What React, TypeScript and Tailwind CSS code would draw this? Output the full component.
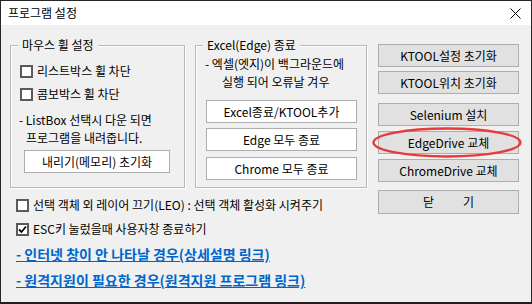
import type { ReactNode } from "react";

const FONT = "font-['Noto_Sans_CJK_KR','Noto_Sans',sans-serif]";

function CheckBox({ checked = false }: { checked?: boolean }) {
  return (
    <span className="flex h-[13px] w-[13px] shrink-0 items-center justify-center border-2 border-[#5a5a5a] bg-white">
      {checked && (
        <svg width="9" height="9" viewBox="0 0 9 9">
          <path d="M1 4.5 L3.5 7 L8 1.5" fill="none" stroke="#000" strokeWidth="1.8" />
        </svg>
      )}
    </span>
  );
}

function CheckRow({ label, checked }: { label: string; checked?: boolean }) {
  return (
    <div className="flex h-[16px] items-center gap-[4px] text-[12px] leading-[16px] text-black">
      <CheckBox checked={checked} />
      <span className="whitespace-nowrap">{label}</span>
    </div>
  );
}

function WinButton({ children, white = false, className = "" }: { children: ReactNode; white?: boolean; className?: string }) {
  return (
    <div
      className={`flex h-[23px] items-center justify-center border border-[#adadad] text-[12px] leading-[16px] text-black whitespace-nowrap ${
        white ? "bg-white" : "bg-[#e1e1e1]"
      } ${className}`}
    >
      {children}
    </div>
  );
}

function GroupBox({ title, className = "", children }: { title: string; className?: string; children: ReactNode }) {
  return (
    <div className={`relative h-[143px] border border-[#b9b9b9] shadow-[inset_1px_1px_0_#fff,1px_1px_0_#fff] ${className}`}>
      <span className="absolute -top-[9px] left-[7px] bg-[#f0f0f0] px-[4px] text-[12px] leading-[16px] whitespace-nowrap">
        {title}
      </span>
      {children}
    </div>
  );
}

export default function App() {
  return (
    <div className={`h-[304px] w-[532px] bg-[#1f1f1f] ${FONT}`}>
      <div className="flex h-[302px] flex-col border-x border-t border-[#262626]">
        {/* title bar */}
        <div className="flex h-[24px] items-center justify-between bg-white pl-[7px] pr-[10px]">
          <span className="text-[12px] leading-[16px] text-black">프로그램 설정</span>
          <svg width="11" height="11" viewBox="0 0 11 11">
            <path d="M0.5 0.5 L10.5 10.5 M10.5 0.5 L0.5 10.5" stroke="#000" strokeWidth="1" />
          </svg>
        </div>

        {/* body */}
        <div className="flex flex-1 bg-[#f0f0f0] text-black">
          <div className="flex flex-col pl-[9px] pt-[20px]">
            <div className="flex">
              <GroupBox title="마우스 휠 설정" className="w-[175px]">
                <div className="flex flex-col pl-[9px] pt-[17px]">
                  <CheckRow label="리스트박스 휠 차단" />
                  <div className="mt-[7px]">
                    <CheckRow label="콤보박스 휠 차단" />
                  </div>
                  <div className="mt-[9px] text-[12px] leading-[18px] whitespace-nowrap">
                    <div className="-ml-px">- ListBox 선택시 다운 되면</div>
                    <div className="pl-[6px]">프로그램을 내려줍니다.</div>
                  </div>
                  <WinButton white className="mt-[3px] ml-[4px] w-[146px]">
                    내리기(메모리) 초기화
                  </WinButton>
                </div>
              </GroupBox>

              <GroupBox title="Excel(Edge) 종료" className="ml-[10px] w-[172px]">
                <div className="flex flex-col pl-[9px] pt-[9px]">
                  <div className="text-[12px] leading-[18px] whitespace-nowrap">
                    <div>- 엑셀(엣지)이 백그라운드에</div>
                    <div className="pl-[17px]">실행 되어 오류날 겨우</div>
                  </div>
                  <div className="mt-[9px] ml-px flex w-[151px] flex-col gap-[5px]">
                    <WinButton white>Excel종료/KTOOL추가</WinButton>
                    <WinButton white>Edge 모두 종료</WinButton>
                    <WinButton white className="mt-px">Chrome 모두 종료</WinButton>
                  </div>
                </div>
              </GroupBox>
            </div>

            <div className="mt-[9px] flex flex-col pl-[6px]">
              <CheckRow label="선택 객체 외 레이어 끄기(LEO) : 선택 객체 활성화 시켜주기" />
              <div className="mt-[8px]">
                <CheckRow label="ESC키 눌렀을때 사용자창 종료하기" checked />
              </div>
              <a className="mt-[7px] text-[14px] font-bold leading-[20px] text-[#0066cc] underline whitespace-nowrap">
                - 인터넷 창이 안 나타날 경우(상세설명 링크)
              </a>
              <a className="mt-[6px] text-[14px] font-bold leading-[20px] text-[#0066cc] underline whitespace-nowrap">
                - 원격지원이 필요한 경우(원격지원 프로그램 링크)
              </a>
            </div>
          </div>

          {/* right buttons */}
          <div className="ml-[11px] flex w-[141px] flex-col pt-[19px]">
            <WinButton>KTOOL설정 초기화</WinButton>
            <WinButton className="mt-[4px]">KTOOL위치 초기화</WinButton>
            <WinButton className="mt-[9px]">Selenium 설치</WinButton>
            <div className="relative mt-[5px]">
              <WinButton>EdgeDrive 교체</WinButton>
              <svg
                className="pointer-events-none absolute -left-[6px] -top-[4px]"
                width="151"
                height="31"
                viewBox="0 0 151 31"
              >
                <ellipse cx="75" cy="15.5" rx="73.5" ry="14" fill="none" stroke="#e8393b" strokeWidth="2.4" />
              </svg>
            </div>
            <WinButton className="mt-[5px]">ChromeDrive 교체</WinButton>
            <WinButton className="mt-[8px] h-[24px] gap-[29px]">
              <span>닫</span>
              <span>기</span>
            </WinButton>
          </div>
        </div>
      </div>
    </div>
  );
}
